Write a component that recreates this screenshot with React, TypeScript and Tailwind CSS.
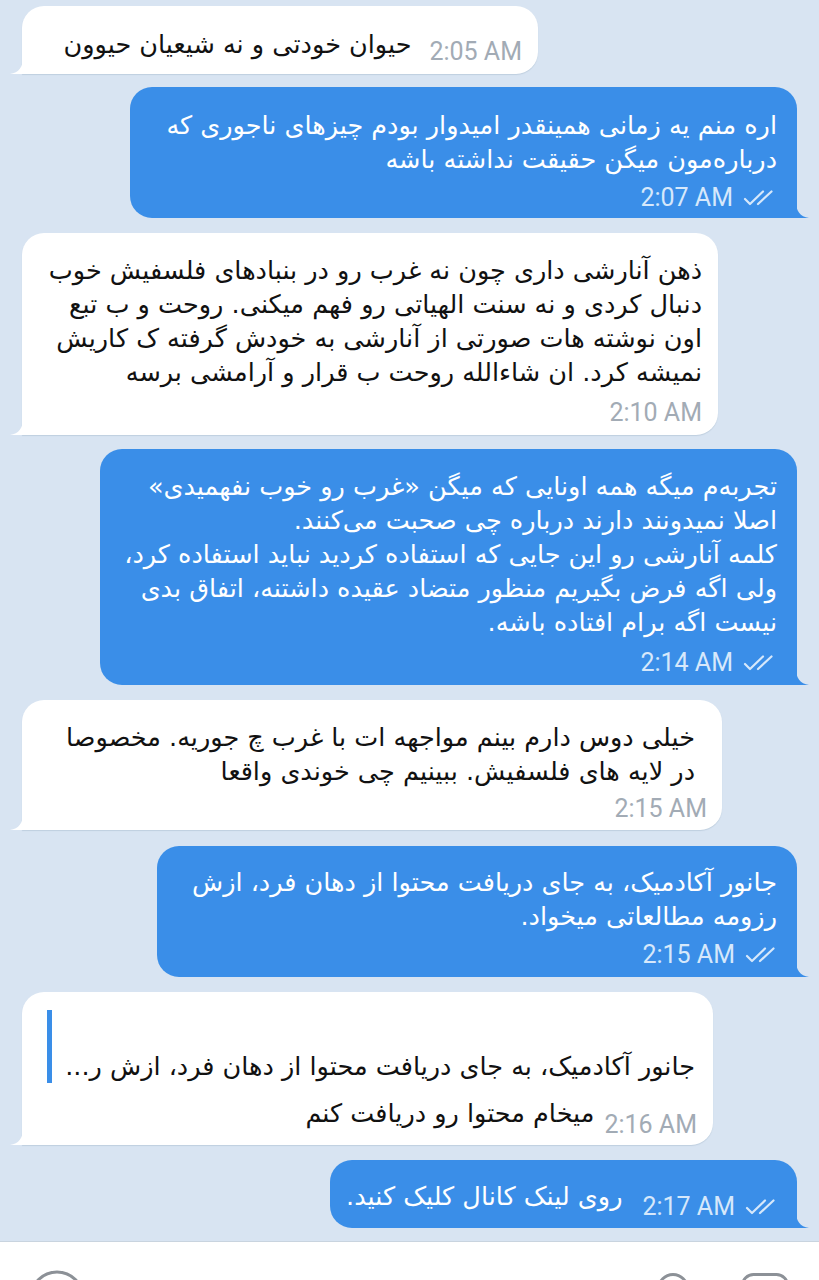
import React from 'react';
import clsx from 'clsx';

function Ticks() {
  return (
    <svg width="36" height="16" viewBox="0 0 36 16" fill="none" stroke="currentColor" strokeWidth="2.2" strokeLinecap="round" strokeLinejoin="round">
      <path d="M2 9 L7 14 L20 1.5" />
      <path d="M15 14 L28.5 1.5" />
    </svg>
  );
}

function Tail({ out }: { out: boolean }) {
  if (out) {
    return (
      <svg className="absolute bottom-0 right-[-12px]" width="13" height="16" viewBox="0 0 13 16">
        <path d="M0 0 C0 9 4 14.5 13 16 L0 16 Z" fill="#3a8ee8" />
      </svg>
    );
  }
  return (
    <svg className="absolute bottom-0 left-[-12px]" width="13" height="16" viewBox="0 0 13 16">
      <path d="M13 0 C13 9 9 14.5 0 16 L13 16 Z" fill="#ffffff" />
    </svg>
  );
}

function Bubble({ out, className, children }: { out: boolean; className?: string; children: React.ReactNode }) {
  return (
    <div
      className={clsx(
        'relative shrink-0 rounded-[22px]',
        out
          ? 'self-end mr-[22px] bg-[#3a8ee8] text-white rounded-br-none'
          : 'self-start ml-[22px] bg-white text-[#111] rounded-bl-none shadow-[0_1px_1px_rgba(80,110,140,0.18)]',
        className
      )}
    >
      {children}
      <Tail out={out} />
    </div>
  );
}

function Time({ out, t }: { out: boolean; t: string }) {
  return (
    <div className={clsx('flex items-center gap-[10px] h-[28px] font-[Roboto,sans-serif] text-[25px] leading-[28px]', out ? 'text-[#d6e8fb]' : 'text-[#a2abb5]')}>
      <span>{t}</span>
      {out && <Ticks />}
    </div>
  );
}

function Lines({ lines }: { lines: string[] }) {
  return (
    <>
      {lines.map((l, i) => (
        <div key={i} className="whitespace-nowrap">
          {l}
        </div>
      ))}
    </>
  );
}

const fa = "font-['DejaVu_Sans',sans-serif] text-[25.5px] leading-[34px]";

export default function App() {
  return (
    <div className="w-full h-[1280px] overflow-hidden bg-[#d8e4f2] flex flex-col">
      <main className="flex-1 flex flex-col">
        {/* 2:05 */}
        <Bubble out={false} className="mt-[6px] w-[516px]">
          <div className="flex items-start justify-end gap-[18px] pt-[21px] pb-[8px] pr-[16px] pl-[25px]">
            <div dir="rtl" className={clsx(fa, 'whitespace-nowrap')}>حیوان خودتی و نه شیعیان حیوون</div>
            <div className="mt-[11px]">
              <Time out={false} t="2:05 AM" />
            </div>
          </div>
        </Bubble>

        {/* 2:07 */}
        <Bubble out className="mt-[13px] w-[667px]">
          <div dir="rtl" className={clsx(fa, 'pt-[21px] pr-[20px]')}>
            <Lines lines={['اره منم یه زمانی همینقدر امیدوار بودم چیزهای ناجوری که', 'درباره‌مون میگن حقیقت نداشته باشه']} />
          </div>
          <div className="flex justify-end mt-[8px] mb-[6px] pr-[18px]">
            <Time out t="2:07 AM" />
          </div>
        </Bubble>

        {/* 2:10 */}
        <Bubble out={false} className="mt-[15px] w-[696px]">
          <div dir="rtl" className={clsx(fa, 'pt-[20px] pr-[16px]')}>
            <Lines
              lines={[
                'ذهن آنارشی داری چون نه غرب رو در بنبادهای فلسفیش خوب',
                'دنبال کردی و نه سنت الهیاتی رو فهم میکنی.  روحت و ب تبع',
                'اون نوشته هات صورتی از آنارشی به خودش گرفته ک کاریش',
                'نمیشه کرد. ان شاءالله روحت ب قرار و آرامشی برسه',
              ]}
            />
          </div>
          <div className="flex justify-end mt-[10px] mb-[8px] pr-[16px]">
            <Time out={false} t="2:10 AM" />
          </div>
        </Bubble>

        {/* 2:14 */}
        <Bubble out className="mt-[14px] w-[697px]">
          <div dir="rtl" className={clsx(fa, 'pt-[20px] pr-[20px]')}>
            <Lines
              lines={[
                'تجربه‌م میگه همه اونایی که میگن «غرب رو خوب نفهمیدی»',
                'اصلا نمیدونند دارند درباره چی صحبت می‌کنند.',
                'کلمه آنارشی رو این جایی که استفاده کردید نباید استفاده کرد،',
                'ولی اگه فرض بگیریم منظور متضاد عقیده داشتنه، اتفاق بدی',
                'نیست اگه برام افتاده باشه.',
              ]}
            />
          </div>
          <div className="flex justify-end mt-[10px] mb-[8px] pr-[18px]">
            <Time out t="2:14 AM" />
          </div>
        </Bubble>

        {/* 2:15 in */}
        <Bubble out={false} className="mt-[15px] w-[700px]">
          <div dir="rtl" className={clsx(fa, 'pt-[20px] pr-[27px]')}>
            <Lines
              lines={['خیلی دوس دارم بینم مواجهه ات با غرب چ جوریه.  مخصوصا', 'در لایه های فلسفیش. ببینیم چی خوندی واقعا']}
            />
          </div>
          <div className="flex justify-end mt-[7px] mb-[7px] pr-[15px]">
            <Time out={false} t="2:15 AM" />
          </div>
        </Bubble>

        {/* 2:15 out */}
        <Bubble out className="mt-[16px] w-[640px]">
          <div dir="rtl" className={clsx(fa, 'pt-[19px] pr-[20px]')}>
            <Lines lines={['جانور آکادمیک، به جای دریافت محتوا از دهان فرد، ازش', 'رزومه مطالعاتی میخواد.']} />
          </div>
          <div className="flex justify-end mt-[8px] mb-[8px] pr-[16px]">
            <Time out t="2:15 AM" />
          </div>
        </Bubble>

        {/* 2:16 reply */}
        <Bubble out={false} className="mt-[15px] w-[691px]">
          <div className="flex mt-[18px] ml-[25px] mr-[18px] h-[73px]">
            <div className="w-[5px] shrink-0 bg-[#3a8ee8]" />
            <div dir="rtl" className={clsx(fa, 'flex-1 flex flex-col justify-end whitespace-nowrap')}>
              جانور آکادمیک، به جای دریافت محتوا از دهان فرد، ازش ر...
            </div>
          </div>
          <div className="flex items-start justify-end gap-[10px] mt-[13px] pb-[6px] pr-[16px] h-[49px]">
            <div dir="rtl" className={clsx(fa, 'whitespace-nowrap')}>میخام محتوا رو دریافت کنم</div>
            <div className="mt-[15px]">
              <Time out={false} t="2:16 AM" />
            </div>
          </div>
        </Bubble>

        {/* 2:17 */}
        <Bubble out className="mt-[15px] w-[467px]">
          <div className="flex items-start justify-end gap-[20px] pt-[19px] pb-[7px] pr-[16px]">
            <div dir="rtl" className={clsx(fa, 'whitespace-nowrap')}>روی لینک کانال کلیک کنید.</div>
            <div className="mt-[14px]">
              <Time out t="2:17 AM" />
            </div>
          </div>
        </Bubble>
      </main>

      {/* input bar */}
      <div className="h-[39px] shrink-0 bg-white border-t border-[#c9d4df] overflow-hidden flex items-start justify-between">
        <svg className="ml-[29px] mt-[28px]" width="56" height="56" viewBox="0 0 56 56" fill="none" stroke="#8c9197" strokeWidth="3">
          <circle cx="28" cy="28" r="26" />
        </svg>
        <div className="flex items-start gap-[52px] mr-[30px] mt-[31px]">
          <svg width="32" height="50" viewBox="0 0 32 50" fill="none" stroke="#8c9197" strokeWidth="3">
            <rect x="1.5" y="1.5" width="29" height="46" rx="14.5" />
          </svg>
          <svg width="48" height="48" viewBox="0 0 48 48" fill="none" stroke="#8c9197" strokeWidth="3">
            <rect x="1.5" y="1.5" width="45" height="45" rx="11" />
          </svg>
        </div>
      </div>
    </div>
  );
}
